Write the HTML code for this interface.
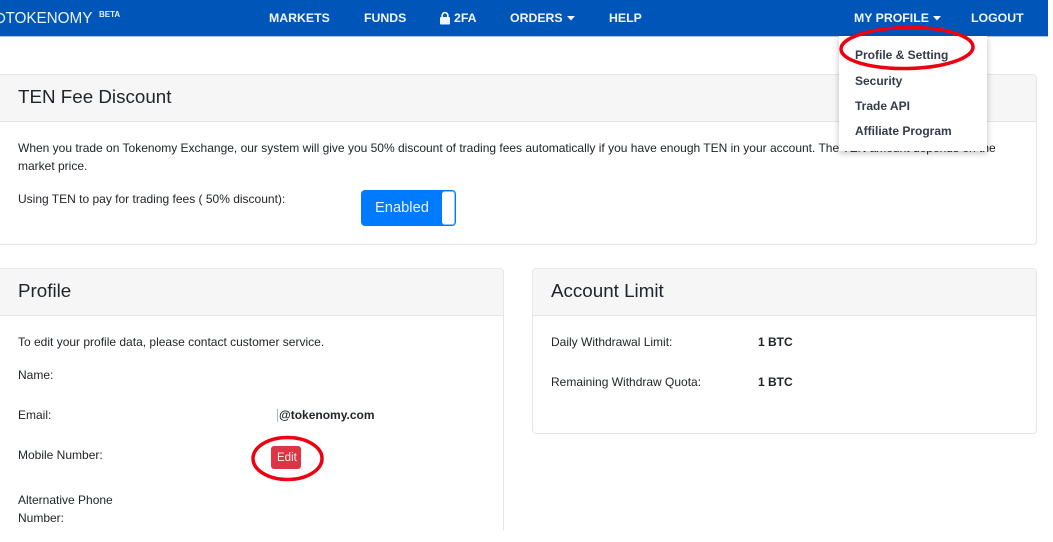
<!DOCTYPE html>
<html><head><meta charset="utf-8"><style>
html,body{margin:0;padding:0;background:#fff;width:1053px;height:542px;overflow:hidden}
body{position:relative;font-family:"Liberation Sans",sans-serif;color:#212529}
.a{position:absolute;white-space:nowrap}
.nav{position:absolute;left:0;top:0;width:1048px;height:36px;background:#0055b8;border-bottom:1px solid #a9c3e0}
.n{position:absolute;top:11px;font-size:12.3px;line-height:15px;font-weight:bold;color:#f2f6fc;white-space:nowrap}
.card{position:absolute;border:1.5px solid #e6e6e6;border-radius:4px;background:#fff;box-sizing:border-box}
.hd{position:absolute;left:0;right:0;top:0;background:#f6f6f6;border-bottom:1.5px solid #e4e4e4;box-sizing:border-box;border-radius:3px 3px 0 0}
.t{font-size:12px;line-height:15px;color:#212529}
.h{font-size:18.8px;line-height:24px;color:#212529}
.b{font-size:12px;line-height:15px;font-weight:bold;color:#212529}
.m{position:absolute;left:855px;font-size:12px;line-height:15px;font-weight:bold;color:#343a4a;white-space:nowrap}
</style></head><body>
<div class="nav"></div>
<svg class="a" style="left:0;top:10px" width="6" height="16"><circle cx="0" cy="8" r="4.5" fill="none" stroke="#cfe3f7" stroke-width="1.5"/></svg>
<div class="a" style="left:5.5px;top:10px;font-size:15.3px;line-height:18px;letter-spacing:-.05px;color:#e9f1fb">TOKENOMY</div>
<div class="a" style="left:99px;top:10px;font-size:8px;line-height:10px;font-weight:bold;color:#e4eefa">BETA</div>
<div class="n" style="left:269px">MARKETS</div>
<div class="n" style="left:364px">FUNDS</div>
<svg class="a" style="left:439px;top:11px" width="12" height="14" viewBox="0 0 12 14"><path d="M3.2 7V4.4a2.8 2.8 0 0 1 5.6 0V7" fill="none" stroke="#f2f6fc" stroke-width="1.7"/><rect x="1" y="6" width="10" height="7.5" rx="1" fill="#f2f6fc"/></svg>
<div class="n" style="left:454px">2FA</div>
<div class="n" style="left:510px">ORDERS</div>
<svg class="a" style="left:567px;top:16px" width="8" height="5"><path d="M0 0h8L4 4.5z" fill="#f2f6fc"/></svg>
<div class="n" style="left:609px">HELP</div>
<div class="n" style="left:854px">MY PROFILE</div>
<svg class="a" style="left:933px;top:16px" width="8" height="5"><path d="M0 0h8L4 4.5z" fill="#f2f6fc"/></svg>
<div class="n" style="left:971px">LOGOUT</div>

<div class="card" style="left:-4px;top:74px;width:1041px;height:171px">
<div class="hd" style="height:47px"></div>
</div>
<div class="a h" style="left:18px;top:85px">TEN Fee Discount</div>
<div class="a t" style="left:18px;top:141px">When you trade on Tokenomy Exchange, our system will give you 50% discount of trading fees automatically if you have enough TEN in your account. The TEN amount depends on the</div>
<div class="a t" style="left:18px;top:159px">market price.</div>
<div class="a t" style="left:18px;top:192px">Using TEN to pay for trading fees ( 50% discount):</div>
<div class="a" style="left:361px;top:190px;width:95px;height:36px;background:#007bff;border-radius:4px"></div>
<div class="a" style="left:375px;top:199px;font-size:14.7px;line-height:18px;color:#e8f2ff">Enabled</div>
<div class="a" style="left:442px;top:191px;width:13px;height:34px;background:#fff;border:1px solid #8fc2ff;border-left:none;box-sizing:border-box;border-radius:3px"></div>

<div class="card" style="left:-4px;top:268px;width:508px;height:262px;border-bottom:none;border-radius:4px 4px 0 0">
<div class="hd" style="height:47px"></div>
</div>
<div class="a h" style="left:18px;top:279px">Profile</div>
<div class="a t" style="left:18px;top:335px">To edit your profile data, please contact customer service.</div>
<div class="a t" style="left:18px;top:368px">Name:</div>
<div class="a t" style="left:18px;top:408px">Email:</div>
<div class="a" style="left:277px;top:409px;width:1px;height:13px;background:#9db8d0"></div>
<div class="a b" style="left:279px;top:408px">@tokenomy.com</div>
<div class="a t" style="left:18px;top:448px">Mobile Number:</div>
<div class="a" style="left:271px;top:446px;width:30px;height:23px;background:#dc3545;border-radius:3px"></div>
<div class="a" style="left:277px;top:451px;font-size:11.5px;line-height:14px;color:#fdeef0">Edit</div>
<div class="a t" style="left:18px;top:493px">Alternative Phone</div>
<div class="a t" style="left:18px;top:511px">Number:</div>

<div class="card" style="left:532px;top:268px;width:505px;height:166px">
<div class="hd" style="height:47px"></div>
</div>
<div class="a h" style="left:551px;top:279px">Account Limit</div>
<div class="a t" style="left:551px;top:335px">Daily Withdrawal Limit:</div>
<div class="a b" style="left:758px;top:335px">1 BTC</div>
<div class="a t" style="left:551px;top:375px">Remaining Withdraw Quota:</div>
<div class="a b" style="left:758px;top:375px">1 BTC</div>

<div class="a" style="left:839px;top:36px;width:148px;height:115px;background:#fff;box-shadow:0 2px 6px rgba(0,0,0,.25)"></div>
<div class="m" style="top:48px">Profile &amp; Setting</div>
<div class="m" style="top:74px">Security</div>
<div class="m" style="top:99px">Trade API</div>
<div class="m" style="top:124px">Affiliate Program</div>

<svg class="a" style="left:0;top:0" width="1053" height="542" fill="none" stroke="#ee0010" stroke-width="3.5">
<ellipse cx="907" cy="48" rx="66" ry="20.5" transform="rotate(-1 907 48)"/>
<ellipse cx="287.5" cy="458.5" rx="34.5" ry="21"/>
</svg>
</body></html>
